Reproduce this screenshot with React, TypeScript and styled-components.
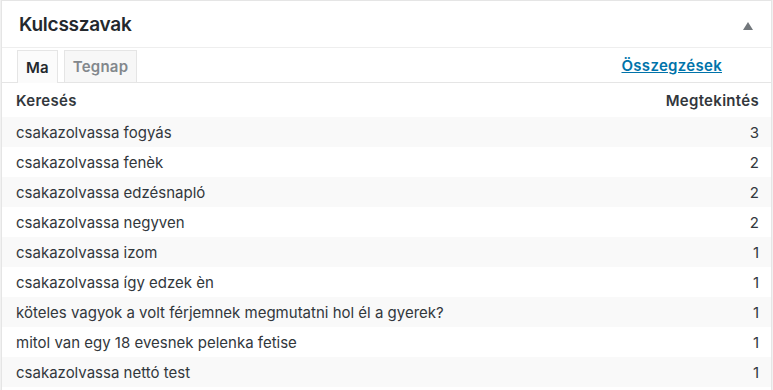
import {createGlobalStyle} from 'styled-components'
import styled from 'styled-components'

interface IRow {
	term: string
	views: number
}

const rows: Array<IRow> = [
	{term: 'csakazolvassa fogyás', views: 3},
	{term: 'csakazolvassa fenèk', views: 2},
	{term: 'csakazolvassa edzésnapló', views: 2},
	{term: 'csakazolvassa negyven', views: 2},
	{term: 'csakazolvassa izom', views: 1},
	{term: 'csakazolvassa így edzek èn', views: 1},
	{term: 'köteles vagyok a volt férjemnek megmutatni hol él a gyerek?', views: 1},
	{term: 'mitol van egy 18 evesnek pelenka fetise', views: 1},
	{term: 'csakazolvassa nettó test', views: 1},
]

function App() {
	return (
		<>
			<GlobalStyle />
			<Panel>
				<Header>
					<Title>Kulcsszavak</Title>
					<Toggle aria-label="toggle" />
				</Header>
				<TabBar>
					<Tabs>
						<Tab $active>Ma</Tab>
						<Tab>Tegnap</Tab>
					</Tabs>
					<SummaryLink href="#">Összegzések</SummaryLink>
				</TabBar>
				<Table>
					<thead>
						<tr>
							<HeadCell>Keresés</HeadCell>
							<HeadCell $right>Megtekintés</HeadCell>
						</tr>
					</thead>
					<tbody>
						{rows.map((row, id) => (
							<Row key={id} $odd={id % 2 === 0}>
								<Cell>{row.term}</Cell>
								<Cell $right>{row.views}</Cell>
							</Row>
						))}
					</tbody>
				</Table>
			</Panel>
		</>
	)
}

const GlobalStyle = createGlobalStyle`
	body {
		margin: 0;
		background: #f1f1f1;
		font-family: Inter, "Liberation Sans", sans-serif;
		color: #32373c;
	}
`
const Panel = styled.div`
	margin-left: 1px;
	width: 771px;
	height: 392px;
	background: #fff;
	border: 1px solid #e5e5e5;
	box-sizing: border-box;
	overflow: hidden;
`
const Header = styled.div`
	display: flex;
	justify-content: space-between;
	align-items: center;
	height: 46px;
	padding: 0 18px 0 17px;
	border-bottom: 1px solid #eee;
`
const Title = styled.h2`
	margin: 0;
	font-size: 19px;
	font-weight: 600;
	letter-spacing: -0.25px;
	color: #23282d;
`
const Toggle = styled.span`
	width: 0;
	height: 0;
	margin-top: 4px;
	border-left: 5px solid transparent;
	border-right: 5px solid transparent;
	border-bottom: 8px solid #72777c;
`
const TabBar = styled.div`
	display: flex;
	justify-content: space-between;
	align-items: flex-end;
	height: 34px;
	padding: 0 49px 0 15px;
	border-bottom: 1px solid #e5e5e5;
`
const Tabs = styled.div`
	display: flex;
	gap: 6px;
`
const Tab = styled.div<{$active?: boolean}>`
	padding: 0 8px;
	display: flex;
	align-items: center;
	font-size: 15px;
	font-weight: 600;
	letter-spacing: 0.2px;
	box-sizing: border-box;
	border: 1px solid #e5e5e5;
	border-bottom: none;
	margin-bottom: ${(p) => (p.$active ? '-1px' : '0')};
	height: ${(p) => (p.$active ? '33px' : '32px')};
	background: ${(p) => (p.$active ? '#fbfbfb' : '#f7f7f7')};
	color: ${(p) => (p.$active ? '#23282d' : '#82878c')};
`
const SummaryLink = styled.a`
	align-self: center;
	margin-top: 1px;
	font-size: 15px;
	font-weight: 600;
	letter-spacing: 0.3px;
	color: #0073aa;
	text-decoration: underline;
`
const Table = styled.table`
	width: 100%;
	border-collapse: collapse;
	font-size: 15px;
`
const HeadCell = styled.th<{$right?: boolean}>`
	height: 34px;
	padding: 0 12px 0 14px;
	text-align: ${(p) => (p.$right ? 'right' : 'left')};
	font-weight: 600;
	letter-spacing: 0.3px;
	color: #32373c;
`
const Row = styled.tr<{$odd?: boolean}>`
	height: 30px;
	background: ${(p) => (p.$odd ? '#f9f9f9' : '#fff')};
`
const Cell = styled.td<{$right?: boolean}>`
	padding: 0 12px 0 14px;
	text-align: ${(p) => (p.$right ? 'right' : 'left')};
	color: #32373c;
`

export default App
